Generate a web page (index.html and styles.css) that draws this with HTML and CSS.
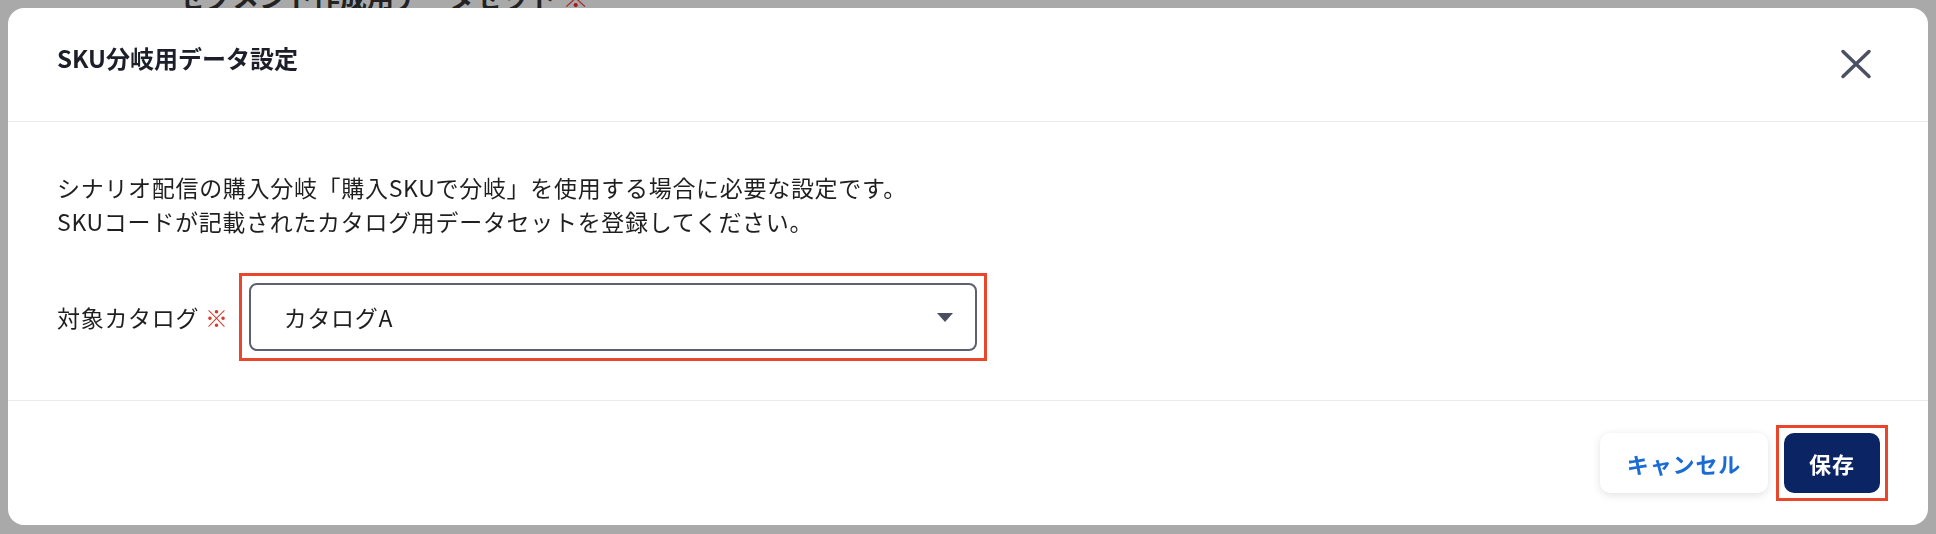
FILE: index.html
```html
<!DOCTYPE html>
<html lang="ja">
<head>
  <meta charset="UTF-8" />
  <meta name="viewport" content="width=device-width, initial-scale=1.0"/>
  <title>SKU分岐用データ設定</title>
  <link rel="stylesheet" href="styles.css">
</head>
<body>
  <div class="page">
    <h2 class="page-heading">セグメント作成用データセット <span class="req">※</span></h2>
  </div>

  <div class="overlay">
    <div class="modal">
      <header class="modal-header">
        <h1 class="modal-title">SKU分岐用データ設定</h1>
        <button class="close-btn" aria-label="閉じる">
          <svg viewBox="0 0 48 48" width="48" height="48">
            <path d="M11 11.5 L37 36.5 M37 11.5 L11 36.5" />
          </svg>
        </button>
      </header>

      <div class="modal-body">
        <p class="description">
          シナリオ配信の購入分岐「購入SKUで分岐」を使用する場合に必要な設定です。<br>
          SKUコードが記載されたカタログ用データセットを登録してください。
        </p>
        <div class="field">
          <label class="field-label">対象カタログ <span class="req">※</span></label>
          <div class="highlight">
            <div class="select">
              <span class="select-value">カタログA</span>
              <span class="caret"></span>
            </div>
          </div>
        </div>
      </div>

      <footer class="modal-footer">
        <button class="btn btn-secondary">キャンセル</button>
        <div class="highlight">
          <button class="btn btn-primary">保存</button>
        </div>
      </footer>
    </div>
  </div>
</body>
</html>
```

FILE: styles.css
```css
body {
  margin: 0;
  background-color: #a9a9a9;
  font-family: "Noto Sans CJK JP", "Noto Sans", sans-serif;
  color: #1f1f1f;
  overflow: hidden;
}
.page {
  padding-left: 178px;
  height: 534px;
}
.page-heading {
  margin: -23px 0 0;
  font-size: 27px;
  font-weight: bold;
  color: #222;
}
.page-heading .req {
  color: #a31d1d;
}
.overlay {
  position: fixed;
  top: 0;
  left: 0;
  right: 0;
  bottom: 0;
  padding: 8px;
}
.modal {
  background-color: white;
  border-radius: 16px;
  overflow: hidden;
}
.modal-header {
  display: flex;
  justify-content: space-between;
  align-items: flex-start;
  padding: 32px 48px 33px 49px;
  border-bottom: 1px solid #ececec;
}
.modal-title {
  margin: 0;
  font-size: 24px;
  line-height: 36px;
  font-weight: bold;
  color: #1c1f2a;
}
.close-btn {
  width: 48px;
  height: 48px;
  padding: 0;
  border: none;
  background: none;
  cursor: pointer;
}
.close-btn svg {
  display: block;
}
.close-btn path {
  stroke: #4b5064;
  stroke-width: 3.5;
  stroke-linecap: round;
  fill: none;
}
.modal-body {
  padding: 48px 49px 39px;
  border-bottom: 1px solid #ececec;
}
.description {
  margin: 0 0 35px;
  font-size: 23px;
  line-height: 34px;
  letter-spacing: 0.03em;
}
.field {
  display: flex;
  align-items: center;
  gap: 10px;
}
.field-label {
  font-size: 23px;
  letter-spacing: 0.03em;
}
.req {
  color: #d83a2a;
}
.highlight {
  border: 3px solid #e8472b;
  padding: 7px;
}
.modal-footer .highlight {
  padding: 5px;
}
.select {
  width: 728px;
  height: 68px;
  box-sizing: border-box;
  display: flex;
  align-items: center;
  justify-content: space-between;
  padding: 0 22px 0 33px;
  border: 2px solid #5d6070;
  border-radius: 8px;
  font-size: 23px;
  letter-spacing: 0.03em;
}
.caret {
  width: 0;
  height: 0;
  border-left: 8px solid transparent;
  border-right: 8px solid transparent;
  border-top: 9px solid #4a4f5e;
}
.modal-footer {
  display: flex;
  justify-content: flex-end;
  align-items: center;
  gap: 8px;
  padding: 24px 40px;
}
.btn {
  height: 60px;
  border: none;
  border-radius: 10px;
  font-family: inherit;
  font-size: 22px;
  font-weight: bold;
  letter-spacing: 0.04em;
  cursor: pointer;
}
.btn-secondary {
  width: 168px;
  background-color: white;
  color: #1a6cd4;
  box-shadow: 0 2px 8px rgba(0,0,0,0.12);
}
.btn-primary {
  display: block;
  width: 96px;
  background-color: #0b2463;
  color: white;
}
```
